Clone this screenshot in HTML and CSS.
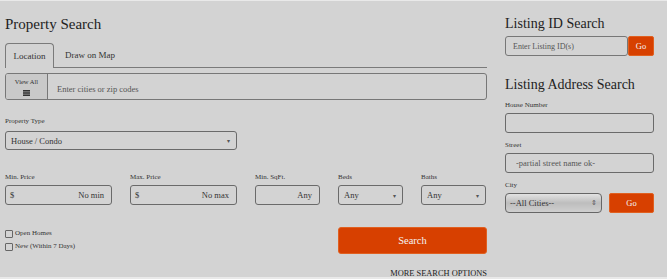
FILE: index.html
```html
<!DOCTYPE html>
<html>
  <head>
    <title>Property Search</title>
    <link rel="stylesheet" href="styles.css">
  </head>
  <body>
    <div class="page">
      <div class="left-col">
        <h1>Property Search</h1>

        <div class="tabs">
          <div class="tab active">Location</div>
          <div class="tab">Draw on Map</div>
        </div>

        <div class="location-box">
          <div class="view-all">
            <span>View All</span>
            <svg width="7" height="6" viewBox="0 0 7 6">
              <rect x="0" y="0" width="7" height="1.6" fill="#333"/>
              <rect x="0" y="2.2" width="7" height="1.6" fill="#333"/>
              <rect x="0" y="4.4" width="7" height="1.6" fill="#333"/>
            </svg>
          </div>
          <input type="text" class="location-input" placeholder="Enter cities or zip codes">
        </div>

        <label class="field-label first">Property Type</label>
        <div class="select type-select">
          <span>House / Condo</span>
          <span class="caret">&#9662;</span>
        </div>

        <div class="filter-row">
          <div class="filter wide">
            <label class="field-label">Min. Price</label>
            <div class="money-box"><span>$</span><span>No min</span></div>
          </div>
          <div class="filter wide">
            <label class="field-label">Max. Price</label>
            <div class="money-box"><span>$</span><span>No max</span></div>
          </div>
          <div class="filter narrow">
            <label class="field-label">Min. SqFt.</label>
            <div class="money-box right"><span>Any</span></div>
          </div>
          <div class="filter narrow">
            <label class="field-label">Beds</label>
            <div class="select"><span>Any</span><span class="caret">&#9662;</span></div>
          </div>
          <div class="filter narrow">
            <label class="field-label">Baths</label>
            <div class="select"><span>Any</span><span class="caret">&#9662;</span></div>
          </div>
        </div>

        <div class="bottom-row">
          <div class="checks">
            <label class="check"><span class="box"></span>Open Homes</label>
            <label class="check"><span class="box"></span>New (Within 7 Days)</label>
          </div>
          <button class="search-button">Search</button>
        </div>

        <div class="more-options">MORE SEARCH OPTIONS</div>
      </div>

      <div class="right-col">
        <h2 class="id-title">Listing ID Search</h2>
        <div class="id-row">
          <input type="text" class="id-input" placeholder="Enter Listing ID(s)">
          <button class="go-button small">Go</button>
        </div>

        <h2 class="address-title">Listing Address Search</h2>
        <label class="side-label">House Number</label>
        <input type="text" class="side-input">
        <label class="side-label">Street</label>
        <input type="text" class="side-input" placeholder="-partial street name ok-">
        <label class="side-label">City</label>
        <div class="city-row">
          <div class="city-select">
            <span>--All Cities--</span>
            <span class="updown">&#8661;</span>
          </div>
          <button class="go-button">Go</button>
        </div>
      </div>
    </div>
  </body>
</html>
```

FILE: styles.css
```css
html {
  background-color: #e9e9e9;
}

body {
  margin: 0;
  font-family: "Liberation Serif", "Times New Roman", serif;
  color: #333;
}

.page {
  margin-top: 1px;
  height: 276px;
  background-color: #d3d3d3;
  display: flex;
}

.left-col {
  width: 482px;
  padding-left: 5px;
}

.right-col {
  width: 149px;
  margin-left: 18px;
}

h1 {
  font-size: 15px;
  line-height: 18px;
  font-weight: normal;
  margin: 14px 0 0;
  color: #222;
}

.tabs {
  display: flex;
  margin-top: 10px;
  height: 24px;
  border-bottom: 1px solid #7a7a7a;
}

.tab {
  font-size: 9px;
  line-height: 24px;
  padding: 0 11px;
  color: #333;
}

.tab.active {
  width: 49px;
  padding: 0;
  text-align: center;
  border: 1px solid #7a7a7a;
  border-bottom: none;
  border-radius: 4px 4px 0 0;
  height: 25px;
  box-sizing: border-box;
  background-color: #d3d3d3;
  margin-bottom: -1px;
  line-height: 24px;
}

.location-box {
  margin-top: 5px;
  height: 27px;
  box-sizing: border-box;
  border: 1px solid #777;
  border-radius: 3px;
  display: flex;
}

.view-all {
  width: 42px;
  background-color: #c9c9c9;
  border-right: 1px solid #777;
  border-radius: 2px 0 0 2px;
  display: flex;
  flex-direction: column;
  align-items: center;
  font-size: 6.5px;
  line-height: 8px;
  padding-top: 4px;
  box-sizing: border-box;
  gap: 4px;
}

.location-input {
  flex: 1;
  border: none;
  background: transparent;
  font-family: inherit;
  font-size: 8.5px;
  padding: 5px 0 0 9px;
  outline: none;
}

.location-input::placeholder,
.id-input::placeholder,
.side-input::placeholder {
  color: #555;
}

.field-label {
  display: block;
  font-size: 7px;
  line-height: 9px;
  color: #333;
}

.field-label.first {
  margin-top: 17px;
}

.select {
  height: 19px;
  box-sizing: border-box;
  border: 1px solid #6a6a6a;
  border-radius: 3px;
  display: flex;
  align-items: center;
  justify-content: space-between;
  padding: 0 6px 0 5px;
  font-size: 8.5px;
}

.type-select {
  width: 232px;
  margin-top: 5px;
}

.caret {
  font-size: 6px;
  color: #555;
}

.filter-row {
  display: flex;
  margin-top: 23px;
}

.filter .field-label {
  margin-bottom: 3px;
}

.filter.wide {
  width: 107px;
  margin-right: 18px;
}

.filter.narrow {
  width: 65px;
  margin-right: 18px;
}

.filter.narrow:last-child {
  margin-right: 0;
}

.filter .select {
  height: 20px;
}

.money-box {
  height: 20px;
  box-sizing: border-box;
  border: 1px solid #6a6a6a;
  border-radius: 3px;
  display: flex;
  align-items: center;
  justify-content: space-between;
  padding: 0 7px 0 4px;
  font-size: 8.5px;
}

.money-box.right {
  justify-content: flex-end;
}

.bottom-row {
  display: flex;
  justify-content: space-between;
  align-items: flex-start;
  height: 27px;
  margin-top: 22px;
}

.checks {
  display: flex;
  flex-direction: column;
}

.check {
  display: flex;
  align-items: center;
  font-size: 7px;
  line-height: 13px;
  color: #333;
}

.check .box {
  width: 6px;
  height: 6px;
  border: 1px solid #666;
  border-radius: 1px;
  margin-right: 2px;
}

.search-button {
  width: 149px;
  height: 27px;
  background-color: #d74000;
  border: 1px solid #e06020;
  border-radius: 3px;
  color: #f4f4f4;
  font-family: inherit;
  font-size: 10.5px;
  padding: 0;
}

.more-options {
  text-align: right;
  font-size: 8.4px;
  line-height: 10px;
  margin-top: 15px;
  color: #222;
}

h2 {
  font-size: 14px;
  line-height: 17px;
  font-weight: normal;
  margin: 0;
  color: #222;
}

.id-title {
  margin-top: 14px;
}

.id-row {
  display: flex;
  margin-top: 4px;
  height: 20px;
}

.id-input {
  width: 123px;
  box-sizing: border-box;
  border: 1px solid #777;
  border-radius: 3px;
  background: transparent;
  font-family: inherit;
  font-size: 8px;
  padding: 0 7px;
  outline: none;
}

.go-button {
  width: 45px;
  height: 20px;
  background-color: #d74000;
  border: 1px solid #e06020;
  border-radius: 2px;
  color: #f4f4f4;
  font-family: inherit;
  font-size: 8.5px;
  padding: 0;
}

.go-button.small {
  width: 26px;
}

.address-title {
  margin-top: 20px;
}

.side-label {
  display: block;
  font-size: 7px;
  line-height: 9px;
  margin-top: 8px;
  color: #333;
}

.side-input {
  display: block;
  margin-top: 3px;
  width: 149px;
  height: 20px;
  box-sizing: border-box;
  border: 1px solid #6a6a6a;
  border-radius: 3px;
  background: transparent;
  font-family: inherit;
  font-size: 8.5px;
  padding: 0 10px;
  outline: none;
}

.city-row {
  display: flex;
  justify-content: space-between;
  margin-top: 3px;
}

.city-select {
  width: 97px;
  height: 20px;
  box-sizing: border-box;
  border: 1px solid #666;
  border-radius: 4px;
  background: linear-gradient(#e2e2e2, #bdbdbd 50%, #cfcfcf);
  display: flex;
  align-items: center;
  justify-content: space-between;
  padding: 0 4px 0 4px;
  font-size: 8.5px;
  color: #333;
}

.updown {
  font-size: 7px;
  color: #555;
}
```
